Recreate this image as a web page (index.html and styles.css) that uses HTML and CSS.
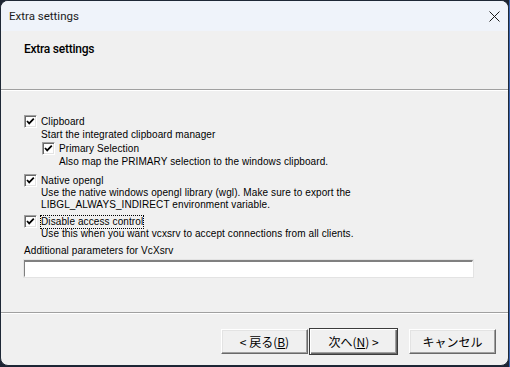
FILE: index.html
```html
<!DOCTYPE html>
<html lang="ja">
<head>
<meta charset="utf-8">
<link rel="stylesheet" href="styles.css">
</head>
<body>
<div class="window">
  <div class="titlebar">
    <span class="title">Extra settings</span>
    <svg class="close" width="11" height="11" viewBox="0 0 11 11"><path d="M0.5 0.5 L10.5 10.5 M10.5 0.5 L0.5 10.5" stroke="#1a1a1a" stroke-width="1" fill="none"/></svg>
  </div>
  <div class="header">
    <div class="heading">Extra settings</div>
  </div>
  <div class="content">
    <div class="opt">
      <span class="cb"><svg width="9" height="9" viewBox="0 0 9 9"><path d="M1 4 L3.2 6.4 L7.8 1.6" stroke="#000" stroke-width="1.7" fill="none"/></svg></span>
      <span class="lbl">Clipboard</span>
    </div>
    <div class="desc">Start the integrated clipboard manager</div>
    <div class="sub">
      <div class="opt">
        <span class="cb"><svg width="9" height="9" viewBox="0 0 9 9"><path d="M1 4 L3.2 6.4 L7.8 1.6" stroke="#000" stroke-width="1.7" fill="none"/></svg></span>
        <span class="lbl">Primary Selection</span>
      </div>
      <div class="desc">Also map the PRIMARY selection to the windows clipboard.</div>
    </div>
    <div class="opt native">
      <span class="cb"><svg width="9" height="9" viewBox="0 0 9 9"><path d="M1 4 L3.2 6.4 L7.8 1.6" stroke="#000" stroke-width="1.7" fill="none"/></svg></span>
      <span class="lbl">Native opengl</span>
    </div>
    <div class="desc tight">Use the native windows opengl library (wgl). Make sure to export the<br>LIBGL_ALWAYS_INDIRECT environment variable.</div>
    <div class="opt access">
      <span class="cb"><svg width="9" height="9" viewBox="0 0 9 9"><path d="M1 4 L3.2 6.4 L7.8 1.6" stroke="#000" stroke-width="1.7" fill="none"/></svg></span>
      <span class="lbl focus">Disable access control</span>
    </div>
    <div class="desc last">Use this when you want vcxsrv to accept connections from all clients.</div>
    <div class="param">Additional parameters for VcXsrv</div>
    <div class="input"></div>
  </div>
  <div class="footer">
    <button class="btn">&lt; 戻る(<u>B</u>)</button>
    <button class="btn default">次へ(<u>N</u>) &gt;</button>
    <button class="btn cancel">キャンセル</button>
  </div>
</div>
</body>
</html>
```
FILE: styles.css
```css
html, body {
  margin: 0;
  padding: 0;
}
body {
  width: 510px;
  height: 367px;
  background: linear-gradient(to right, #1c2433 509px, #3a64b0 509px);
  overflow: hidden;
  font-family: "Liberation Sans", "Noto Sans CJK JP", sans-serif;
  font-size: 10px;
  color: #000;
}
.window {
  box-sizing: border-box;
  width: 509px;
  height: 366px;
  border: 1px solid #1e2836;
  border-radius: 8px;
  background: #f0f0f0;
  overflow: hidden;
  display: flex;
  flex-direction: column;
}
.titlebar {
  height: 30px;
  flex: none;
  background: #eff3fa;
  display: flex;
  align-items: center;
  justify-content: space-between;
  padding: 0 8px 0 8px;
}
.title {
  font-family: Roboto, "Noto Sans", sans-serif;
  font-size: 11.5px;
  color: #1a1a1a;
}
.close {
  display: block;
}
.header {
  height: 59px;
  flex: none;
  box-sizing: border-box;
  border-bottom: 1px solid #a0a0a0;
  padding: 11px 0 0 23px;
}
.heading {
  font-family: Roboto, "Noto Sans", sans-serif;
  font-weight: 500;
  font-size: 12px;
  letter-spacing: -0.25px;
  line-height: 14px;
  color: #000;
}
.content {
  flex: 1;
  border-top: 1px solid #fff;
  padding: 24px 0 0 23px;
  letter-spacing: 0.1px;
  line-height: 12px;
}
.opt {
  display: flex;
  align-items: center;
  height: 13px;
}
.opt.native {
  margin-top: 6px;
}
.opt.access {
  margin-top: 4px;
}
.cb {
  box-sizing: border-box;
  width: 13px;
  height: 13px;
  flex: none;
  background: #fff;
  border-top: 1px solid #a0a0a0;
  border-left: 1px solid #a0a0a0;
  border-right: 1px solid #fff;
  border-bottom: 1px solid #fff;
  box-shadow: inset 1px 1px 0 #696969, inset -1px -1px 0 #e3e3e3;
  display: flex;
  align-items: center;
  justify-content: center;
  margin-right: 4px;
}
.cb svg {
  display: block;
}
.lbl.focus {
  outline: 1px dotted #000;
  outline-offset: 0;
}
.desc {
  margin-left: 17px;
  padding-top: 1px;
}
.desc.tight {
  margin-top: -1px;
}
.desc.last {
  padding-top: 0;
}
.sub {
  margin-left: 18px;
  margin-top: 1px;
}
.param {
  margin-top: 5px;
}
.input {
  box-sizing: border-box;
  width: 449px;
  height: 17px;
  margin-top: 3px;
  background: #fff;
  border-top: 2px solid #808080;
  border-left: 1px solid #808080;
  border-right: 1px solid #fff;
  border-bottom: 1px solid #fff;
  box-shadow: 0 0 0 1px #e3e3e3;
}
.footer {
  height: 53px;
  flex: none;
  box-sizing: border-box;
  border-top: 1px solid #a0a0a0;
  box-shadow: inset 0 1px 0 #fff;
  display: flex;
  align-items: flex-start;
  padding: 16px 0 0 220px;
}
.btn {
  box-sizing: border-box;
  width: 87px;
  height: 25px;
  background: #f0f0f0;
  border: 1px solid;
  border-color: #fff #696969 #696969 #fff;
  box-shadow: inset -1px -1px 0 #a0a0a0, inset 1px 1px 0 #e3e3e3;
  font-family: "Noto Sans CJK JP", sans-serif;
  font-size: 12px;
  color: #000;
  padding: 0;
  margin: 0;
  flex: none;
}
.btn.default {
  width: 89px;
  height: 27px;
  margin: -1px 0 0 1px;
  border: 1px solid #3c3c3c;
  box-shadow: inset 1px 1px 0 #fff, inset -1px -1px 0 #696969, inset -2px -2px 0 #a0a0a0;
}
.btn.cancel {
  margin-left: 11px;
}
```
